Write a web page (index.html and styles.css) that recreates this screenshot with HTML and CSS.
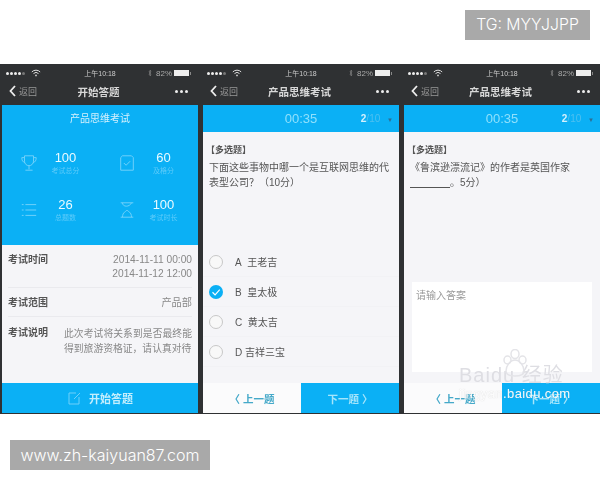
FILE: index.html
```html
<!DOCTYPE html>
<html lang="zh">
<head>
    <meta charset="UTF-8">
    <title>产品思维考试</title>
    <link rel="stylesheet" href="styles.css">
</head>
<body>
    <div class="top-row">
        <div class="badge badge-tg">TG: MYYJJPP</div>
    </div>

    <div class="phones">
        <!-- 开始答题 -->
        <div class="phone">
            <div class="status">
                <span class="signal"><i></i><i></i><i></i><i></i><i class="off"></i>
                    <svg class="wifi" viewBox="0 0 12 9"><path d="M1 3.200a7 7 0 0 1 10 0M3 5.200a4.200 4.200 0 0 1 6 0" fill="none" stroke="#ddd" stroke-width="1.200"/><circle cx="6" cy="7.400" r="1" fill="#ddd"/></svg>
                </span>
                <span class="clock">上午10:18</span>
                <span class="battery"><svg class="bt" viewBox="0 0 4 8"><path d="M1 2 3 6 2 7V1L3 2 1 6" fill="none" stroke="#888" stroke-width="0.600"/></svg>82%<b class="cell"></b><b class="bolt"></b></span>
            </div>
            <div class="navbar">
                <span class="back"><svg class="back-icon" viewBox="0 0 7 12"><path d="M6 1 1.500 6 6 11" fill="none" stroke="#eee" stroke-width="1.800"/></svg>返回</span>
                <span class="nav-title">开始答题</span>
                <span class="more"><i></i><i></i><i></i></span>
            </div>
            <div class="body-light">
                <div class="hero">
                    <div class="hero-title">产品思维考试</div>
                    <div class="stats">
                        <div class="stat">
                            <svg class="stat-icon" viewBox="0 0 20 20"><path d="M5 2h10v6a5 5 0 0 1-10 0zM5 4H2c0 3 1 5 3.500 5.500M15 4h3c0 3-1 5-3.500 5.500M10 13v4M6 18h8" fill="none" stroke="#6fd0fa" stroke-width="1.100"/></svg>
                            <div class="stat-text"><div class="stat-num">100</div><div class="stat-label">考试总分</div></div>
                        </div>
                        <div class="stat">
                            <svg class="stat-icon" viewBox="0 0 20 20"><path d="M5 2h10l2 2v14H3V4zM6.500 10l2.500 2.500 4.500-4.500" fill="none" stroke="#6fd0fa" stroke-width="1.100"/></svg>
                            <div class="stat-text"><div class="stat-num">60</div><div class="stat-label">及格分</div></div>
                        </div>
                        <div class="stat">
                            <svg class="stat-icon" viewBox="0 0 20 20"><path d="M2 4h2M6 4h12M2 10h2M6 10h12M2 16h2M6 16h12" fill="none" stroke="#6fd0fa" stroke-width="1.100"/></svg>
                            <div class="stat-text"><div class="stat-num">26</div><div class="stat-label">总题数</div></div>
                        </div>
                        <div class="stat">
                            <svg class="stat-icon" viewBox="0 0 20 20"><path d="M3 2h14M3 18h14M5 2c0 5 8 5 10 0M5 18c0-6 4-6 5-8 1 2 5 2 5 8" fill="none" stroke="#6fd0fa" stroke-width="1.100"/></svg>
                            <div class="stat-text"><div class="stat-num">100</div><div class="stat-label">考试时长</div></div>
                        </div>
                    </div>
                </div>
                <div class="info-row">
                    <span class="info-key">考试时间</span>
                    <span class="info-value">2014-11-11 00:00<br>2014-11-12 12:00</span>
                </div>
                <div class="info-row">
                    <span class="info-key">考试范围</span>
                    <span class="info-value">产品部</span>
                </div>
                <div class="info-row info-last">
                    <span class="info-key">考试说明</span>
                    <span class="info-value info-note">此次考试将关系到是否最终能得到旅游资格证，请认真对待</span>
                </div>
            </div>
            <div class="start-btn">
                <svg class="start-icon" viewBox="0 0 14 14"><path d="M9 2H2v11h10V6M7 8l6-6" fill="none" stroke="#6fd0fa" stroke-width="1"/></svg>
                开始答题
            </div>
        </div>

        <!-- 选择题 -->
        <div class="phone">
            <div class="status">
                <span class="signal"><i></i><i></i><i></i><i></i><i class="off"></i>
                    <svg class="wifi" viewBox="0 0 12 9"><path d="M1 3.200a7 7 0 0 1 10 0M3 5.200a4.200 4.200 0 0 1 6 0" fill="none" stroke="#ddd" stroke-width="1.200"/><circle cx="6" cy="7.400" r="1" fill="#ddd"/></svg>
                </span>
                <span class="clock">上午10:18</span>
                <span class="battery"><svg class="bt" viewBox="0 0 4 8"><path d="M1 2 3 6 2 7V1L3 2 1 6" fill="none" stroke="#888" stroke-width="0.600"/></svg>82%<b class="cell"></b><b class="bolt"></b></span>
            </div>
            <div class="navbar">
                <span class="back"><svg class="back-icon" viewBox="0 0 7 12"><path d="M6 1 1.500 6 6 11" fill="none" stroke="#eee" stroke-width="1.800"/></svg>返回</span>
                <span class="nav-title">产品思维考试</span>
                <span class="more"><i></i><i></i><i></i></span>
            </div>
            <div class="timer">
                <span class="time">00:35</span>
                <span class="progress"><b>2</b>/10 <small>▼</small></span>
            </div>
            <div class="body-light">
                <div class="question">
                    <div class="q-type">【多选题】</div>
                    <p class="q-text">下面这些事物中哪一个是互联网思维的代表型公司？（10分）</p>
                </div>
                <div class="options">
                    <div class="option"><span class="radio"></span>A&nbsp; 王老吉</div>
                    <div class="option"><span class="radio radio-on"><svg viewBox="0 0 12 12"><path d="M3 6.200 5.200 8.400 9.200 4" fill="none" stroke="#fff" stroke-width="1"/></svg></span>B&nbsp; 皇太极</div>
                    <div class="option"><span class="radio"></span>C&nbsp; 黄太吉</div>
                    <div class="option"><span class="radio"></span>D 吉祥三宝</div>
                </div>
            </div>
            <div class="pager">
                <span class="prev">〈 上一题</span>
                <span class="next">下一题 〉</span>
            </div>
        </div>

        <!-- 填空题 -->
        <div class="phone">
            <div class="status">
                <span class="signal"><i></i><i></i><i></i><i></i><i class="off"></i>
                    <svg class="wifi" viewBox="0 0 12 9"><path d="M1 3.200a7 7 0 0 1 10 0M3 5.200a4.200 4.200 0 0 1 6 0" fill="none" stroke="#ddd" stroke-width="1.200"/><circle cx="6" cy="7.400" r="1" fill="#ddd"/></svg>
                </span>
                <span class="clock">上午10:18</span>
                <span class="battery"><svg class="bt" viewBox="0 0 4 8"><path d="M1 2 3 6 2 7V1L3 2 1 6" fill="none" stroke="#888" stroke-width="0.600"/></svg>82%<b class="cell"></b><b class="bolt"></b></span>
            </div>
            <div class="navbar">
                <span class="back"><svg class="back-icon" viewBox="0 0 7 12"><path d="M6 1 1.500 6 6 11" fill="none" stroke="#eee" stroke-width="1.800"/></svg>返回</span>
                <span class="nav-title">产品思维考试</span>
                <span class="more"><i></i><i></i><i></i></span>
            </div>
            <div class="timer">
                <span class="time">00:35</span>
                <span class="progress"><b>2</b>/10 <small>▼</small></span>
            </div>
            <div class="body-light">
                <div class="question">
                    <div class="q-type">【多选题】</div>
                    <p class="q-text">《鲁滨逊漂流记》的作者是英国作家<br><u>　　　　</u>。5分）</p>
                </div>
                <div class="answer">请输入答案</div>
            </div>
            <div class="pager">
                <span class="prev">〈 上一题</span>
                <span class="next">下一题 〉</span>
            </div>
            <div class="watermark">
                <svg class="wm-paw" viewBox="0 0 24 28"><g fill="none" stroke="#e4e4e8" stroke-width="1.500"><ellipse cx="12" cy="5" rx="4" ry="4.500"/><ellipse cx="4.500" cy="11" rx="3.500" ry="4"/><ellipse cx="19.500" cy="11" rx="3.500" ry="4"/><path d="M12 11c-5 0-9 6-9 11 0 3 3 5 9 5s9-2 9-5c0-5-4-11-9-11z"/></g></svg>
                <div class="wm-logo">Baidu 经验</div>
                <div class="wm-url">jingyan.baidu.com</div>
            </div>
        </div>
    </div>

    <div class="bottom-row">
        <div class="badge badge-site">www.zh-kaiyuan87.com</div>
    </div>
</body>
</html>
```

FILE: styles.css
```css
body {
    margin: 0;
    width: 600px;
    height: 480px;
    overflow: hidden;
    background-color: #fff;
    font-family: "Liberation Sans", "Noto Sans CJK SC", sans-serif;
    color: #555;
}
.top-row {
    display: flex;
    justify-content: flex-end;
    padding: 10px 10px 0 0;
    height: 64px;
    box-sizing: border-box;
}
.bottom-row {
    padding: 26px 0 0 10px;
}
.badge {
    background-color: #a9a9a9;
    color: #fff;
    height: 30px;
    line-height: 30px;
    text-align: center;
    font-family: Inter, "Liberation Sans", sans-serif;
    font-weight: 300;
    font-size: 15.8px;
}
.badge-tg {
    width: 125px;
}
.badge-site {
    width: 200px;
    font-size: 16px;
}
.phones {
    display: flex;
    height: 350px;
    box-sizing: border-box;
    padding: 0 0 1px 2px;
    gap: 5px;
    background-color: #2f3133;
    filter: blur(0.5px);
}
.phone {
    position: relative;
    width: 196px;
    display: flex;
    flex-direction: column;
    flex: none;
}
.status {
    height: 18px;
    display: flex;
    justify-content: space-between;
    align-items: center;
    padding: 0 4px;
    font-size: 7px;
    color: #ccc;
    background-color: #2f3133;
}
.signal {
    flex: 1;
    display: flex;
    align-items: center;
    gap: 1px;
}
.signal i {
    width: 3px;
    height: 3px;
    border-radius: 50%;
    background-color: #eee;
}
.signal i.off {
    background-color: #777;
}
.wifi {
    width: 10px;
    height: 8px;
    margin-left: 5px;
}
.clock {
    flex: none;
}
.battery {
    flex: 1;
    display: flex;
    justify-content: flex-end;
    align-items: center;
    gap: 1px;
    font-size: 8px;
    color: #aaa;
}
.bt {
    width: 4px;
    height: 8px;
    margin-right: 3px;
}
.cell {
    width: 15px;
    height: 6px;
    margin-left: 1px;
    background-color: #eee;
}
.bolt {
    width: 1px;
    height: 3px;
    margin-right: 3px;
    background-color: #888;
}
.navbar {
    height: 23px;
    display: flex;
    justify-content: space-between;
    align-items: center;
    padding: 0 10px 5px 7px;
    box-sizing: border-box;
    background-color: #2f3133;
    color: #ddd;
}
.back {
    display: flex;
    align-items: center;
    gap: 3px;
    font-size: 9px;
    color: #999;
    width: 45px;
}
.back-icon {
    width: 7px;
    height: 12px;
}
.nav-title {
    font-size: 10.5px;
    font-weight: bold;
    color: #d8d8d8;
}
.more {
    width: 45px;
    display: flex;
    justify-content: flex-end;
    gap: 2px;
}
.more i {
    width: 3px;
    height: 3px;
    border-radius: 50%;
    background-color: #eee;
}
.body-light {
    flex: 1;
    min-height: 0;
    background-color: #f5f5f8;
}
.hero {
    height: 140px;
    background-color: #0bb0f5;
    color: #d5f1fd;
}
.hero-title {
    text-align: center;
    font-size: 10px;
    line-height: 28px;
}
.stats {
    display: grid;
    grid-template-columns: 1fr 1fr;
    row-gap: 21px;
    padding-top: 17px;
}
.stat {
    display: flex;
    align-items: center;
    justify-content: center;
    gap: 11px;
}
.stat-icon {
    width: 18px;
    height: 18px;
}
.stat-text {
    text-align: center;
    width: 34px;
}
.stat-num {
    font-size: 13px;
    line-height: 15px;
    color: #eafaff;
}
.stat-label {
    font-size: 7px;
    line-height: 11px;
    color: #5dcbfa;
    white-space: nowrap;
}
.info-row {
    display: flex;
    justify-content: space-between;
    margin: 0 6px;
    padding: 8px 0 6px;
    border-bottom: 1px solid #eaeaee;
    font-size: 10px;
    line-height: 14px;
}
.info-last {
    padding-top: 9px;
    border-bottom: none;
}
.info-key {
    flex: none;
    color: #555;
    font-weight: bold;
}
.info-value {
    text-align: right;
    color: #888;
    font-size: 10.2px;
}
.info-note {
    width: 128px;
    font-size: 9.8px;
    line-height: 15px;
    text-align: justify;
}
.start-btn {
    height: 30px;
    display: flex;
    justify-content: center;
    align-items: center;
    gap: 8px;
    background-color: #0bb0f5;
    color: #c4eefd;
    font-size: 11px;
    font-weight: bold;
}
.start-icon {
    width: 14px;
    height: 14px;
}
.timer {
    height: 27px;
    display: flex;
    align-items: center;
    justify-content: center;
    position: relative;
    background-color: #0bb0f5;
    color: #8fe0fc;
}
.time {
    font-size: 13px;
}
.progress {
    position: absolute;
    right: 6px;
    top: 8px;
    font-size: 10px;
    color: #4ec0f0;
}
.progress b {
    color: #d5f1fd;
}
.progress small {
    font-size: 6px;
    color: #2d6f96;
    margin-left: 4px;
}
.question {
    padding: 11px 6px 0;
}
.q-type {
    margin-left: -3px;
    font-size: 9px;
    line-height: 14px;
    font-weight: bold;
}
.q-text {
    margin: 3px 0 0;
    font-size: 10px;
    line-height: 15px;
    color: #555;
}
.options {
    padding-top: 57px;
}
.option {
    display: flex;
    align-items: center;
    gap: 12px;
    height: 30px;
    box-sizing: border-box;
    padding-left: 6px;
    border-bottom: 1px solid #f2f2f5;
    font-size: 10px;
    color: #555;
}
.radio {
    width: 14px;
    height: 14px;
    box-sizing: border-box;
    border: 1px solid #c8c8c8;
    border-radius: 50%;
    background-color: #f8f8f8;
}
.radio-on {
    border: none;
    background-color: #0bb0f5;
}
.radio-on svg {
    display: block;
}
.pager {
    display: flex;
    height: 30px;
    font-size: 10.5px;
    font-weight: bold;
}
.prev,
.next {
    flex: 1;
    display: flex;
    justify-content: center;
    align-items: center;
}
.prev {
    background-color: #fbfbfc;
    color: #45a9c9;
}
.next {
    background-color: #0bb0f5;
    color: #a5e5fb;
}
.answer {
    margin: 92px 8px 0;
    height: 90px;
    padding: 5px 4px;
    box-sizing: border-box;
    background-color: #fff;
    font-size: 10px;
    color: #999;
}
.watermark {
    position: absolute;
    left: 55px;
    top: 300px;
    width: 115px;
}
.wm-paw {
    position: absolute;
    left: 44px;
    top: -15px;
    width: 24px;
    height: 28px;
}
.wm-logo {
    font-size: 20px;
    line-height: 22px;
    letter-spacing: 1px;
    white-space: nowrap;
    color: #dedee3;
}
.wm-url {
    font-size: 13px;
    line-height: 15px;
    letter-spacing: 0.4px;
    white-space: nowrap;
    color: rgba(255, 255, 255, 0.92);
    text-shadow: 0 0 1px rgba(170, 170, 170, 0.5);
}
```
